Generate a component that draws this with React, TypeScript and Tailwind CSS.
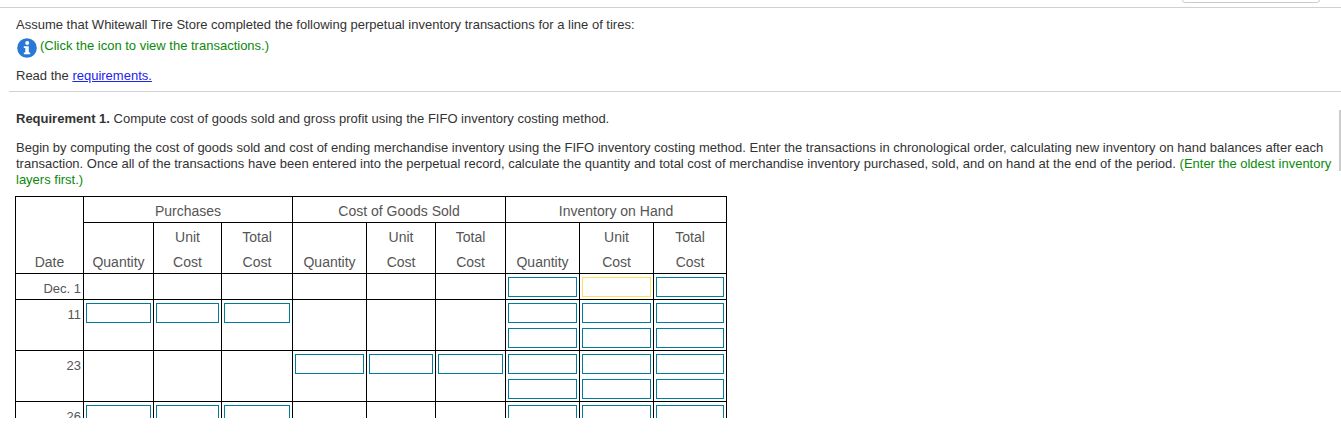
import React from 'react';

const headCell = 'border border-black p-0 text-center font-normal text-[14px] leading-[18px] text-[#555]';
const cell = 'border border-black p-0 align-top';

const Box = ({ w, yellow }: { w: string; yellow?: boolean }) => (
    <div className={`${w} h-5 bg-white border ${yellow ? 'border-[#ffdf5e]' : 'border-[#007c9e]'}`} />
);

const Inputs = ({ w, two, yellow }: { w: string; two?: boolean; yellow?: boolean }) => (
    <td className={cell}>
        <div className="flex flex-col gap-[5px] pl-[2px] pt-[3px]">
            <Box w={w} yellow={yellow} />
            {two && <Box w={w} />}
        </div>
    </td>
);

const ColHead = ({ top, bottom }: { top?: string; bottom: string }) => (
    <td className={`${headCell} align-bottom pb-[2px]`}>
        {top && <div className="mb-[7px]">{top}</div>}
        <div>{bottom}</div>
    </td>
);

const Row = ({ label, h, purchases, sold, two = true, yellow }: { label: string; h: string; purchases?: boolean; sold?: boolean; two?: boolean; yellow?: boolean }) => (
    <tr className={h}>
        <td className={`${cell} pr-[2px] pt-[6px] text-right text-[13px] leading-[18px] text-[#555]`}>{label}</td>
        {purchases ? (
            <>
                <Inputs w="w-[65px]" />
                <Inputs w="w-[63px]" />
                <Inputs w="w-[66px]" />
            </>
        ) : (
            <>
                <td className={cell} />
                <td className={cell} />
                <td className={cell} />
            </>
        )}
        {sold ? (
            <>
                <Inputs w="w-[69px]" />
                <Inputs w="w-[64px]" />
                <Inputs w="w-[65px]" />
            </>
        ) : (
            <>
                <td className={cell} />
                <td className={cell} />
                <td className={cell} />
            </>
        )}
        <Inputs w="w-[69px]" two={two} />
        <Inputs w="w-[69px]" two={two} yellow={yellow} />
        <Inputs w="w-[68px]" two={two} />
    </tr>
);

export default function App() {
    return (
        <div className="relative h-[434px] w-[1341px] overflow-hidden bg-white font-['Liberation_Sans',Arial,sans-serif] text-[13px] text-[#333]">
            <div className="absolute right-[21px] top-[-8px] h-[11px] w-[138px] rounded-[3px] border border-[#ccc]" />
            <div className="absolute right-0 top-[110px] h-[61px] w-[2px] bg-[#ccc]" />

            <div className="h-[8px] border-b border-[#d0d0d8]" />
            <p className="pl-[16px] pt-[9px] leading-[16px]">Assume that Whitewall Tire Store completed the following perpetual inventory transactions for a line of tires:</p>
            <div className="mt-[3px] flex h-[20px] items-center pl-[17px] text-[#0a8a0a]">
                <svg width="20" height="20" viewBox="0 0 20 20" className="mt-[4px] shrink-0">
                    <circle cx="10" cy="10" r="9.8" fill="#2a78d6" />
                    <circle cx="10.2" cy="5" r="2" fill="#fff" />
                    <path d="M6.8 8.2h5v6.2h1.4v1.8H6.8v-1.8h1.5V10H6.8z" fill="#fff" />
                </svg>
                <span className="ml-[3px]">(Click the icon to view the transactions.)</span>
            </div>
            <p className="pl-[16px] pt-[12px] leading-[16px]">
                Read the <span className="text-[#2222ee] underline">requirements.</span>
            </p>
            <div className="ml-[9px] mt-[7px] border-b border-[#d0d0d8]" />

            <p className="pl-[16px] pt-[19px] leading-[16px]">
                <b>Requirement 1.</b> Compute cost of goods sold and gross profit using the FIFO inventory costing method.
            </p>
            <p className="ml-[16px] mt-[13px] w-[1316px] leading-[16px]">
                Begin by computing the cost of goods sold and cost of ending merchandise inventory using the FIFO inventory costing method. Enter the transactions in chronological order, calculating new inventory on hand balances after each transaction. Once all of the transactions have been entered into the perpetual record, calculate the quantity and total cost of merchandise inventory purchased, sold, and on hand at the end of the period.{' '}
                <span className="text-[#0a8a0a]">(Enter the oldest inventory layers first.)</span>
            </p>

            <div className="ml-[15px] mt-[8px] h-[222px] w-[713px] overflow-hidden">
                <table className="w-[712px] table-fixed border-collapse">
                    <colgroup>
                        <col className="w-[68px]" />
                        <col className="w-[70px]" />
                        <col className="w-[68px]" />
                        <col className="w-[71px]" />
                        <col className="w-[74px]" />
                        <col className="w-[69px]" />
                        <col className="w-[70px]" />
                        <col className="w-[74px]" />
                        <col className="w-[74px]" />
                        <col className="w-[73px]" />
                    </colgroup>
                    <tbody>
                        <tr className="h-[26px]">
                            <td rowSpan={2} className={`${headCell} align-bottom pb-[2px]`}>Date</td>
                            <td colSpan={3} className={`${headCell} align-top pt-[5px]`}>Purchases</td>
                            <td colSpan={3} className={`${headCell} align-top pt-[5px]`}>Cost of Goods Sold</td>
                            <td colSpan={3} className={`${headCell} align-top pt-[5px]`}>Inventory on Hand</td>
                        </tr>
                        <tr className="h-[51px]">
                            <ColHead bottom="Quantity" />
                            <ColHead top="Unit" bottom="Cost" />
                            <ColHead top="Total" bottom="Cost" />
                            <ColHead bottom="Quantity" />
                            <ColHead top="Unit" bottom="Cost" />
                            <ColHead top="Total" bottom="Cost" />
                            <ColHead bottom="Quantity" />
                            <ColHead top="Unit" bottom="Cost" />
                            <ColHead top="Total" bottom="Cost" />
                        </tr>
                        <Row label="Dec. 1" h="h-[26px]" two={false} yellow />
                        <Row label="11" h="h-[51px]" purchases />
                        <Row label="23" h="h-[51px]" sold />
                        <Row label="26" h="h-[51px]" purchases />
                    </tbody>
                </table>
            </div>
        </div>
    );
}
